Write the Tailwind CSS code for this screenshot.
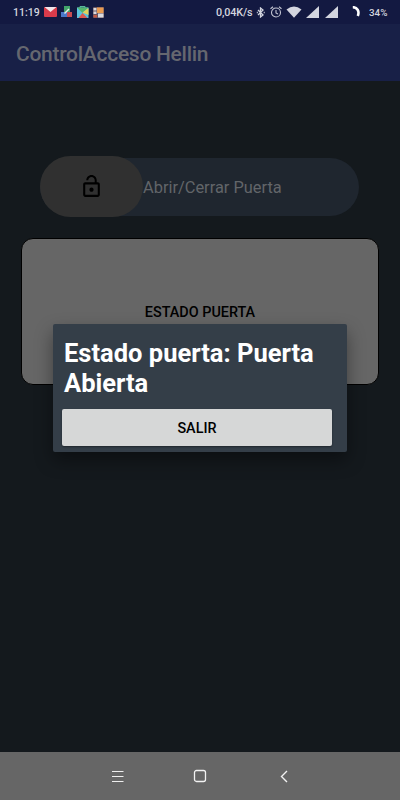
<!DOCTYPE html>
<html lang="es">
<head>
  <meta charset="UTF-8" />
  <meta name="viewport" content="width=device-width, initial-scale=1.0" />
  <title>ControlAcceso Hellin</title>
  <script src="https://cdn.jsdelivr.net/npm/@tailwindcss/browser@4"></script>
</head>
<body class="bg-[#14191d] font-[Roboto,sans-serif]">
  <div class="relative flex h-[800px] w-[400px] flex-col overflow-hidden">

    <!-- status bar -->
    <div class="flex h-6 shrink-0 items-center bg-[#131941] pl-[13px] pr-[13px] text-[10.5px] font-medium text-[#d3d5df]">
      <span class="w-[31px] whitespace-nowrap pt-[2px]">11:19</span>
      <svg class="mr-[4px] h-[10px] w-[13px]" viewBox="0 0 13 10">
        <rect width="13" height="10" rx="1" fill="#d93b4b" />
        <path d="M0.5 0h12L6.5 5z" fill="#f1e6ea" />
      </svg>
      <svg class="mr-1 h-3 w-[11px]" viewBox="0 0 11 12">
        <path d="M3 0h6v6H3z" fill="#42a36a" />
        <path d="M0 6h6v5H0z" fill="#4a78c9" />
        <path d="M6 6h5v5H6z" fill="#c94c50" />
        <path d="M3.5 7.5L8 3" stroke="#e8eee9" stroke-width="1.5" />
      </svg>
      <svg class="mr-1 h-3 w-[13px]" viewBox="0 0 13 12">
        <path d="M4 2V0.5h5V2" fill="none" stroke="#58b898" />
        <path d="M1 1.500h11.500V12H1z" fill="#5bc3dd" />
        <path d="M1 1.500h11.500L6.5 7z" fill="#55b66c" />
        <path d="M12.500 2v7L6.500 6.500z" fill="#e4d35a" />
        <path d="M2.500 12L6.500 7l5 5z" fill="#dc5a50" />
      </svg>
      <svg class="h-[11px] w-[11px]" viewBox="0 0 11 11">
        <rect width="11" height="11" rx="1" fill="#6b5560" />
        <path d="M4 0.500h6.500V6H4z" fill="#e99a50" />
        <path d="M0.500 1h3v2.500h-3zM0.500 4.500h3V7h-3zM5 6.500h5.500v4H5z" fill="#d9d9df" />
        <path d="M0.500 8h3.500v2.500H0.500z" fill="#c55943" />
      </svg>
      <span class="ml-auto w-[41px] whitespace-nowrap pt-[2px] text-[10.8px]"><span class="pl-[1px] tracking-[-0.15px]">0,04K/s</span></span>
      <svg class="mr-[5px] h-[11px] w-[9px]" viewBox="0 0 9 11" fill="none" stroke="#d3d5df" stroke-width="1.3">
        <path d="M2 3L7 8L4.500 10V1L7 3L2 8" />
        <path d="M0.800 5.500h1M7.700 5.500h1" />
      </svg>
      <svg class="mr-1 h-3 w-3" viewBox="0 0 12 12" fill="none" stroke="#c3c5d3" stroke-width="1.1">
        <circle cx="6" cy="6.500" r="4.500" />
        <path d="M6 4v3l2 1M0.500 2.700L3 0.700M11.500 2.700L9 0.700" />
      </svg>
      <svg class="mr-1 h-3 w-4" viewBox="0 0 16 12">
        <path d="M0.500 3.500Q8-2.500 15.500 3.500L8 11.800z" fill="#d3d5df" />
      </svg>
      <svg class="mr-[6px] h-3 w-[13px]" viewBox="0 0 13 12"><path d="M13 0v12H0z" fill="#d3d5df" /></svg>
      <svg class="mr-[14px] h-3 w-[13px]" viewBox="0 0 13 12"><path d="M13 0v12H0z" fill="#d3d5df" /></svg>
      <svg class="mr-[9px] h-3 w-2" viewBox="0 0 8 12">
        <path d="M0.800 1.200C5 1.200 7.800 5 5.800 10" fill="none" stroke="#fff" stroke-width="2.600" />
      </svg>
      <span class="w-[18px] whitespace-nowrap pt-[2px] text-[9.8px]">34%</span>
    </div>

    <!-- toolbar -->
    <header class="flex h-[57px] shrink-0 items-center bg-[#182047] px-4 pt-[5px]">
      <h1 class="whitespace-nowrap text-[21px] font-medium tracking-[-0.27px] text-[#65676f]">ControlAcceso Hellin</h1>
    </header>

    <main class="flex flex-1 flex-col">
      <!-- slide to open -->
      <div class="mx-10 mt-[75px] flex h-[61px] items-center">
        <div class="flex h-[58px] w-[319px] items-center rounded-full bg-[#1f262f]">
          <div class="flex h-[61px] w-[103px] shrink-0 items-center justify-center rounded-full bg-[#303030]">
            <svg class="h-[25px] w-[25px]" viewBox="0 0 24 24" fill="#000">
              <path d="M12 17c1.100 0 2-.9 2-2s-.9-2-2-2-2 .9-2 2 .9 2 2 2zm6-9h-1V6c0-2.760-2.240-5-5-5S7 3.240 7 6h1.900c0-1.710 1.390-3.100 3.100-3.100 1.710 0 3.100 1.390 3.100 3.100v2H6c-1.100 0-2 .9-2 2v10c0 1.100.9 2 2 2h12c1.100 0 2-.9 2-2V10c0-1.100-.9-2-2-2zm0 12H6V10h12v10z" />
            </svg>
          </div>
          <span class="whitespace-nowrap pt-1 text-[16.4px] text-[#626569]">Abrir/Cerrar Puerta</span>
        </div>
      </div>

      <!-- door state -->
      <button class="mx-[21px] mt-[21px] flex h-[147px] items-center justify-center rounded-[12px] border border-black bg-[#666] pt-[3px] text-[14.4px] font-medium text-black">ESTADO PUERTA</button>
    </main>

    <!-- navigation bar -->
    <nav class="flex h-12 shrink-0 items-center bg-[#666] pl-[111px]">
      <svg class="h-[13px] w-[13px]" viewBox="0 0 13 13" stroke="#eee" stroke-width="1.200">
        <path d="M1 1.500h11.500M1 6.500h11.500M1 11.500h11.500" />
      </svg>
      <svg class="ml-[69px] h-[14px] w-[14px]" viewBox="0 0 14 14" fill="none" stroke="#f2f2f2" stroke-width="1.300">
        <rect x="1.500" y="1.500" width="11" height="11" rx="2" />
      </svg>
      <svg class="ml-[73px] h-[13px] w-2" viewBox="0 0 8 13" fill="none" stroke="#f2f2f2" stroke-width="1.400">
        <path d="M7 1L1.500 6.500L7 12" />
      </svg>
    </nav>

    <!-- dialog -->
    <div class="absolute left-[53px] top-[324px] flex h-[128px] w-[294px] flex-col rounded-[2px] bg-[#343e48] pl-[9px] pr-[14px] pt-[14px] shadow-[0_8px_18px_rgba(0,0,0,0.4)]">
      <h2 class="whitespace-nowrap pl-[2px] text-[25.5px] font-bold leading-[30px] text-white">Estado puerta: Puerta<br />Abierta</h2>
      <button class="mt-[11px] h-[37px] w-[270px] rounded-[2px] bg-[#d6d7d7] pt-[3px] text-[14.4px] font-medium text-black shadow-[0_1px_2px_rgba(0,0,0,0.4)]">SALIR</button>
    </div>
  </div>
</body>
</html>
